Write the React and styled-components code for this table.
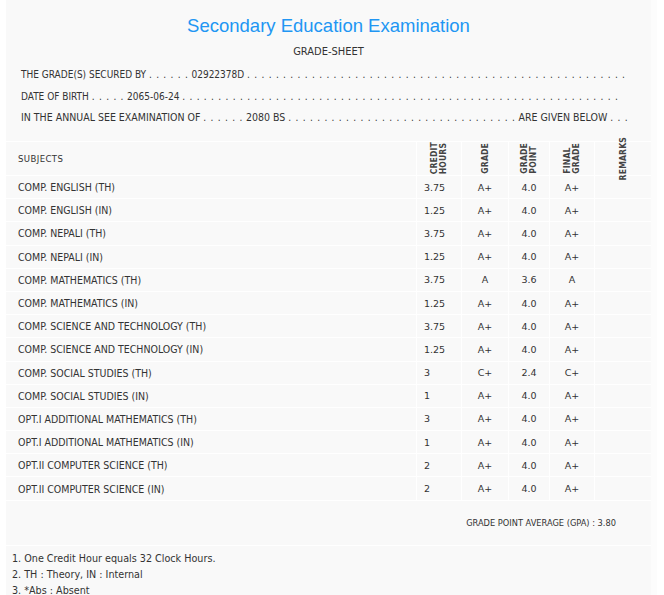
import React from 'react';
import styled, { createGlobalStyle } from 'styled-components';

const GlobalStyle = createGlobalStyle`
  body {
    margin: 0;
    background: #ffffff;
    font-family: "DejaVu Sans Condensed", "DejaVu Sans", sans-serif;
    color: #333333;
  }
`;

const dots = n => <Dots>{Array(n).fill('.').join(' ')}</Dots>;

const subjects = [
    { name: 'COMP. ENGLISH (TH)', credit: '3.75', grade: 'A+', point: '4.0', final: 'A+' },
    { name: 'COMP. ENGLISH (IN)', credit: '1.25', grade: 'A+', point: '4.0', final: 'A+' },
    { name: 'COMP. NEPALI (TH)', credit: '3.75', grade: 'A+', point: '4.0', final: 'A+' },
    { name: 'COMP. NEPALI (IN)', credit: '1.25', grade: 'A+', point: '4.0', final: 'A+' },
    { name: 'COMP. MATHEMATICS (TH)', credit: '3.75', grade: 'A', point: '3.6', final: 'A' },
    { name: 'COMP. MATHEMATICS (IN)', credit: '1.25', grade: 'A+', point: '4.0', final: 'A+' },
    { name: 'COMP. SCIENCE AND TECHNOLOGY (TH)', credit: '3.75', grade: 'A+', point: '4.0', final: 'A+' },
    { name: 'COMP. SCIENCE AND TECHNOLOGY (IN)', credit: '1.25', grade: 'A+', point: '4.0', final: 'A+' },
    { name: 'COMP. SOCIAL STUDIES (TH)', credit: '3', grade: 'C+', point: '2.4', final: 'C+' },
    { name: 'COMP. SOCIAL STUDIES (IN)', credit: '1', grade: 'A+', point: '4.0', final: 'A+' },
    { name: 'OPT.I ADDITIONAL MATHEMATICS (TH)', credit: '3', grade: 'A+', point: '4.0', final: 'A+' },
    { name: 'OPT.I ADDITIONAL MATHEMATICS (IN)', credit: '1', grade: 'A+', point: '4.0', final: 'A+' },
    { name: 'OPT.II COMPUTER SCIENCE (TH)', credit: '2', grade: 'A+', point: '4.0', final: 'A+' },
    { name: 'OPT.II COMPUTER SCIENCE (IN)', credit: '2', grade: 'A+', point: '4.0', final: 'A+' },
];

export default function App() {
    return (
        <>
            <GlobalStyle />
            <Sheet>
                <Title>Secondary Education Examination</Title>
                <SubTitle>GRADE-SHEET</SubTitle>
                <InfoList>
                    <InfoLine>THE GRADE(S) SECURED BY {dots(6)} 02922378D {dots(53)}</InfoLine>
                    <InfoLine>DATE OF BIRTH {dots(5)} 2065-06-24 {dots(61)}</InfoLine>
                    <InfoLine $wide>IN THE ANNUAL SEE EXAMINATION OF {dots(6)} 2080 BS {dots(32)} ARE GIVEN BELOW {dots(3)}</InfoLine>
                </InfoList>

                <Table>
                    <HeadRow>
                        <SubjectCell $head>SUBJECTS</SubjectCell>
                        <Cell><VerticalLabel>CREDIT<br />HOURS</VerticalLabel></Cell>
                        <Cell><VerticalLabel>GRADE</VerticalLabel></Cell>
                        <Cell><VerticalLabel>GRADE<br />POINT</VerticalLabel></Cell>
                        <Cell><VerticalLabel>FINAL<br />GRADE</VerticalLabel></Cell>
                        <Cell><VerticalLabel>REMARKS</VerticalLabel></Cell>
                    </HeadRow>
                    {subjects.map(s => (
                        <Row key={s.name}>
                            <SubjectCell>{s.name}</SubjectCell>
                            <Cell $left>{s.credit}</Cell>
                            <Cell>{s.grade}</Cell>
                            <Cell>{s.point}</Cell>
                            <Cell>{s.final}</Cell>
                            <Cell />
                        </Row>
                    ))}
                    <GpaRow>GRADE POINT AVERAGE (GPA) : 3.80</GpaRow>
                </Table>

                <Notes>
                    <li>1. One Credit Hour equals 32 Clock Hours.</li>
                    <li>2. TH : Theory, IN : Internal</li>
                    <li>3. *Abs : Absent</li>
                </Notes>
            </Sheet>
        </>
    );
}

const Sheet = styled.div`
    margin-left: 6px;
    width: 645px;
    min-height: 640px;
    background: #f9f9f9;
    border-right: 6px solid #fcfcfc;
    padding-top: 14px;
`;

const Title = styled.h1`
    margin: 0;
    font-family: "Liberation Sans", Arial, sans-serif;
    font-weight: normal;
    font-size: 18.5px;
    line-height: 24px;
    color: #2196f3;
    text-align: center;
`;

const SubTitle = styled.div`
    margin-top: 7px;
    font-size: 11px;
    line-height: 14px;
    text-align: center;
`;

const InfoList = styled.div`
    padding: 5px 0 0 15px;
`;

const InfoLine = styled.div`
    font-size: ${p => (p.$wide ? '10.5px' : '10px')};
    line-height: 21.5px;
    white-space: nowrap;
`;

const Dots = styled.span`
    font-size: 10px;
    letter-spacing: 0.75px;
`;

const Table = styled.div`
    margin-top: 12.5px;
    border-top: 1px solid #ffffff;
`;

const Row = styled.div`
    display: grid;
    grid-template-columns: 410px 45px 47px 41px 45px 57px;
    grid-template-rows: 100%;
    height: 23.2px;
    border-bottom: 1px solid #ffffff;
    box-sizing: border-box;
    font-family: "DejaVu Sans", Verdana, sans-serif;
    font-size: 9.5px;
`;

const HeadRow = styled(Row)`
    height: 34px;
`;

const Cell = styled.div`
    min-height: 0;
    border-left: 1px solid #ffffff;
    display: flex;
    align-items: center;
    justify-content: ${p => (p.$left ? 'flex-start' : 'center')};
    padding-left: ${p => (p.$left ? '7px' : '0')};
`;

const SubjectCell = styled.div`
    min-height: 0;
    display: flex;
    align-items: center;
    padding-left: 12px;
    font-family: "DejaVu Sans Condensed", "DejaVu Sans", sans-serif;
    font-size: ${p => (p.$head ? '9.5px' : '10.5px')};
    letter-spacing: ${p => (p.$head ? '0.4px' : '0')};
`;

const VerticalLabel = styled.div`
    writing-mode: vertical-rl;
    transform: rotate(180deg);
    font-family: "DejaVu Sans Condensed", sans-serif;
    font-weight: bold;
    font-size: 8.5px;
    line-height: 9px;
    letter-spacing: 0.2px;
    white-space: nowrap;
    color: #444444;
`;

const GpaRow = styled.div`
    height: 45px;
    box-sizing: border-box;
    border-bottom: 1px solid #ffffff;
    display: flex;
    align-items: center;
    justify-content: flex-end;
    padding-right: 35px;
    font-size: 9.2px;
`;

const Notes = styled.ul`
    list-style: none;
    margin: 0;
    padding: 5px 0 0 6px;
    font-size: 10.7px;
    line-height: 16px;
`;
